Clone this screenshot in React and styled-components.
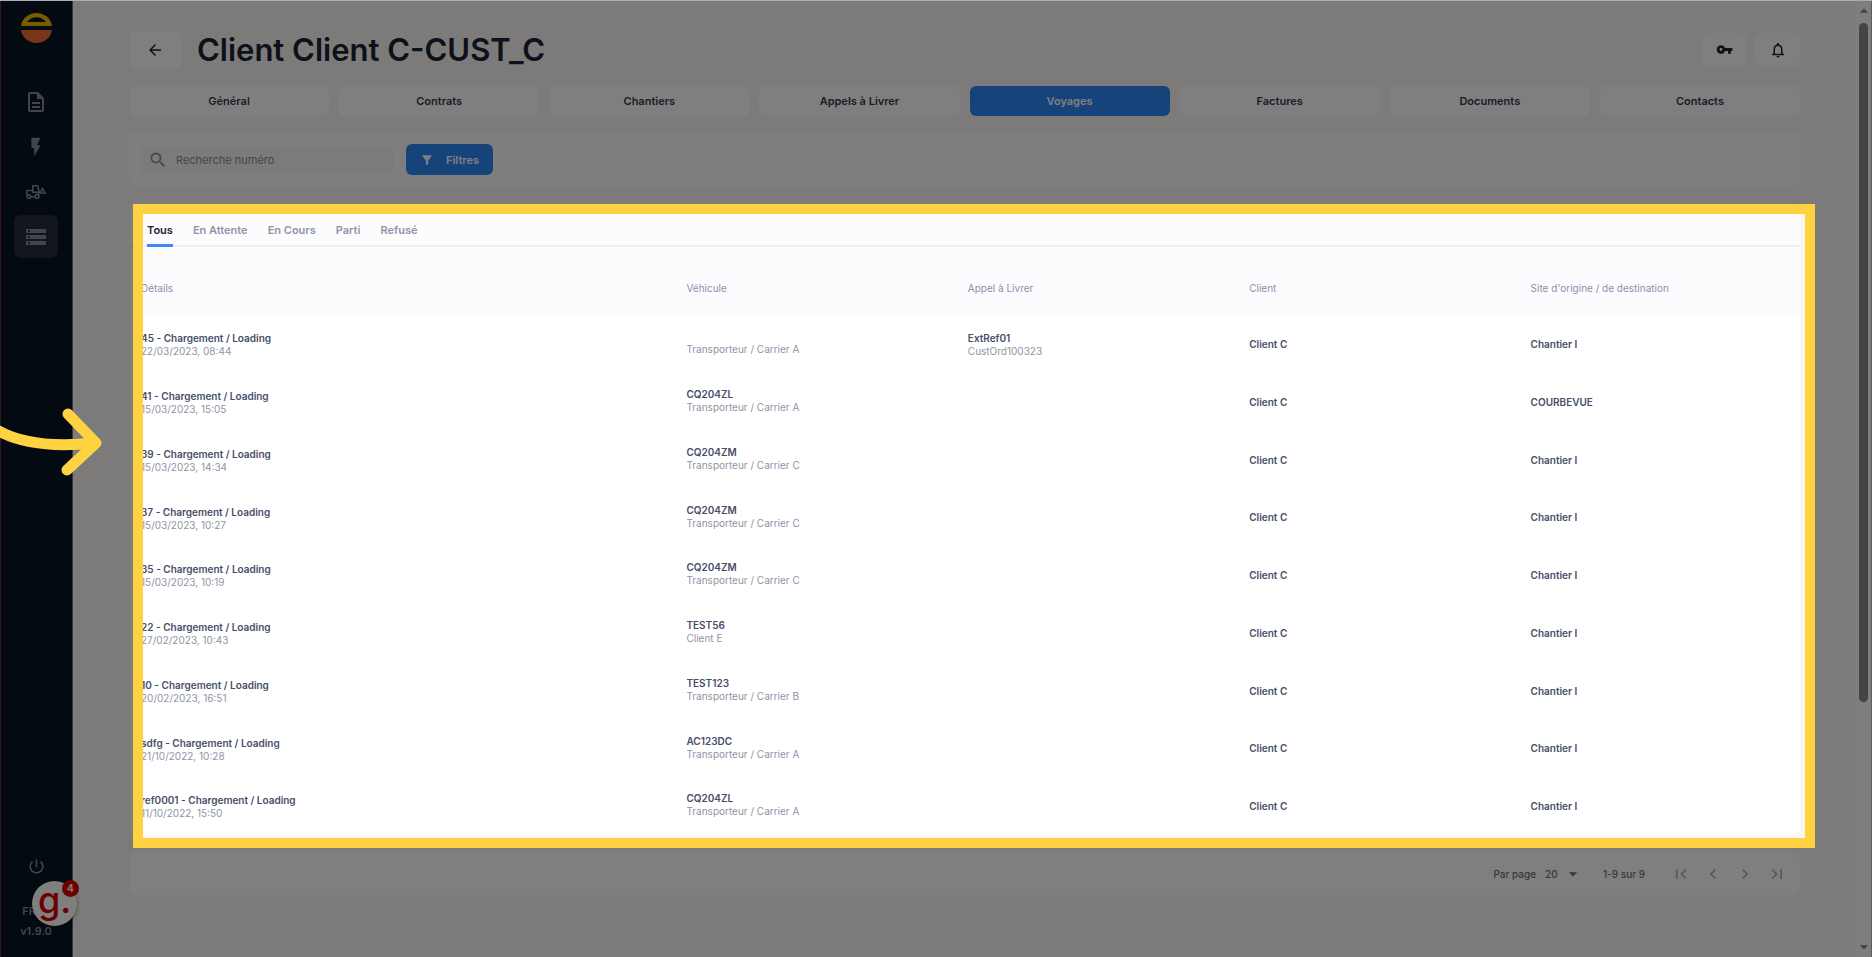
import React from 'react';
import styled, { createGlobalStyle } from 'styled-components';
import {
  MdArrowBack,
  MdArrowDropDown,
  MdArrowDropUp,
  MdChevronLeft,
  MdChevronRight,
  MdFilterAlt,
  MdFirstPage,
  MdFlashOn,
  MdLastPage,
  MdOutlineDescription,
  MdOutlineNotifications,
  MdPowerSettingsNew,
  MdSearch,
  MdStorage,
  MdVpnKey
} from 'react-icons/md';

const sections = [
  'Général',
  'Contrats',
  'Chantiers',
  'Appels à Livrer',
  'Voyages',
  'Factures',
  'Documents',
  'Contacts'
];

const statuses = ['Tous', 'En Attente', 'En Cours', 'Parti', 'Refusé'];

const columns = ['Détails', 'Véhicule', 'Appel à Livrer', 'Client', "Site d'origine / de destination"];

const trips = [
  { ref: '45', date: '22/03/2023, 08:44', plate: '', carrier: 'Transporteur / Carrier A', order: 'ExtRef01', orderRef: 'CustOrd100323', site: 'Chantier I' },
  { ref: '41', date: '15/03/2023, 15:05', plate: 'CQ204ZL', carrier: 'Transporteur / Carrier A', site: 'COURBEVUE' },
  { ref: '39', date: '15/03/2023, 14:34', plate: 'CQ204ZM', carrier: 'Transporteur / Carrier C', site: 'Chantier I' },
  { ref: '37', date: '15/03/2023, 10:27', plate: 'CQ204ZM', carrier: 'Transporteur / Carrier C', site: 'Chantier I' },
  { ref: '35', date: '15/03/2023, 10:19', plate: 'CQ204ZM', carrier: 'Transporteur / Carrier C', site: 'Chantier I' },
  { ref: '22', date: '27/02/2023, 10:43', plate: 'TEST56', carrier: 'Client E', site: 'Chantier I' },
  { ref: '10', date: '20/02/2023, 16:51', plate: 'TEST123', carrier: 'Transporteur / Carrier B', site: 'Chantier I' },
  { ref: 'sdfg', date: '21/10/2022, 10:28', plate: 'AC123DC', carrier: 'Transporteur / Carrier A', site: 'Chantier I' },
  { ref: 'ref0001', date: '11/10/2022, 15:50', plate: 'CQ204ZL', carrier: 'Transporteur / Carrier A', site: 'Chantier I' }
];

const Logo = () => (
  <svg width="31" height="30" viewBox="0 0 31 30" aria-hidden="true">
    <path fillRule="evenodd" fill="#f5b800" d="M0 13C1 5.500 7.500 0 15.500 0S30 5.500 31 13zM6 9h19C22.500 5.700 19.200 4.200 15.500 4.200S8.500 5.700 6 9z" />
    <path fill="#f06a35" d="M0 17h31C30 24.500 23.500 30 15.500 30S1 24.500 0 17z" />
  </svg>
);

const LoaderIcon = () => (
  <svg width="20" height="14" viewBox="0 0 20 14" fill="none" stroke="currentColor" strokeWidth="1.600" aria-hidden="true">
    <path d="M.8 10.500V5.500h6V.8h5l1 4.700v3.800M6.800 5.500v1.700h6M5 11.800h3.500M13 7.200h2.500" />
    <path d="M15 8V6.500l1.500-3 2.500 4.700z" />
    <circle cx="2.900" cy="11.500" r="1.800" />
    <circle cx="11" cy="11.500" r="1.900" />
  </svg>
);

const App = () => {
  return (
    <Page>
      <GlobalStyle />
      <Sidebar>
        <Logo />
        <Nav aria-label="Navigation">
          <NavButton aria-label="Contrats"><MdOutlineDescription size={24} /></NavButton>
          <NavButton aria-label="Production"><MdFlashOn size={22} /></NavButton>
          <NavButton aria-label="Engins"><LoaderIcon /></NavButton>
          <NavButton aria-label="Données" $active><MdStorage size={24} /></NavButton>
        </Nav>
        <SidebarFooter>
          <PowerButton aria-label="Déconnexion"><MdPowerSettingsNew size={19} /></PowerButton>
          <LanguageButton>FR<MdArrowDropDown size={14} /></LanguageButton>
          <span>v1.9.0</span>
        </SidebarFooter>
        <HelpButton aria-label="Aide">
          g.
          <Badge>4</Badge>
        </HelpButton>
      </Sidebar>

      <Main>
        <Header>
          <BackButton aria-label="Retour"><MdArrowBack size={18} /></BackButton>
          <Title>Client Client C-CUST_C</Title>
          <IconButton aria-label="Clés"><MdVpnKey size={17} /></IconButton>
          <IconButton aria-label="Notifications"><MdOutlineNotifications size={18} /></IconButton>
        </Header>

        <Sections>
          {sections.map(name => (
            <SectionButton key={name} $active={name === 'Voyages'}>{name}</SectionButton>
          ))}
        </Sections>

        <Toolbar>
          <SearchBox>
            <MdSearch size={20} />
            <SearchInput type="text" placeholder="Recherche numéro" aria-label="Recherche numéro" />
          </SearchBox>
          <FilterButton><MdFilterAlt size={14} />Filtres</FilterButton>
        </Toolbar>

        <TableCard>
          <Statuses>
            {statuses.map(name => (
              <StatusTab key={name} $active={name === 'Tous'}>{name}</StatusTab>
            ))}
          </Statuses>
          <Table>
            <thead>
              <tr>
                {columns.map(name => <HeadCell key={name}>{name}</HeadCell>)}
              </tr>
            </thead>
            <tbody>
              {trips.map(trip => (
                <Row key={trip.ref}>
                  <Cell>
                    <Strong>{trip.ref} - Chargement / Loading</Strong>
                    <Muted>{trip.date}</Muted>
                  </Cell>
                  <Cell $lift="4px">
                    <Strong>{trip.plate}</Strong>
                    <Muted>{trip.carrier}</Muted>
                  </Cell>
                  <Cell>
                    {trip.order && <Strong>{trip.order}</Strong>}
                    {trip.orderRef && <Muted>{trip.orderRef}</Muted>}
                  </Cell>
                  <Cell $lift="2px"><Strong>Client C</Strong></Cell>
                  <Cell $lift="2px"><Strong>{trip.site}</Strong></Cell>
                </Row>
              ))}
            </tbody>
          </Table>
          <Spotlight />
        </TableCard>

        <Pagination>
          <label htmlFor="per-page">Par page</label>
          <SelectWrapper>
            <PageSelect id="per-page" defaultValue="20">
              <option>20</option>
              <option>50</option>
            </PageSelect>
            <MdArrowDropDown size={20} />
          </SelectWrapper>
          <Range>1-9 sur 9</Range>
          <PageButtons>
            <PageButton aria-label="Première page"><MdFirstPage size={20} /></PageButton>
            <PageButton aria-label="Page précédente"><MdChevronLeft size={20} /></PageButton>
            <PageButton aria-label="Page suivante"><MdChevronRight size={20} /></PageButton>
            <PageButton aria-label="Dernière page"><MdLastPage size={20} /></PageButton>
          </PageButtons>
        </Pagination>
      </Main>

      <ScrollTrack>
        <MdArrowDropUp size={20} />
        <ScrollThumb />
        <MdArrowDropDown size={20} />
      </ScrollTrack>

      <Pointer width="104" height="76" viewBox="0 0 104 76" aria-hidden="true">
        <path d="M-12 19C10 36 46 43 94 38" />
        <path d="M68 9l28 29-29 27" />
      </Pointer>
    </Page>
  );
};

const GlobalStyle = createGlobalStyle`
  * {
    box-sizing: border-box;
  }
  body {
    margin: 0;
    font-family: Inter, 'Liberation Sans', sans-serif;
    font-size: 11px;
    color: #1b2235;
  }
  button, input, select {
    font: inherit;
    color: inherit;
    border: 0;
    padding: 0;
    background: none;
  }
  button {
    cursor: pointer;
  }
  svg {
    flex: none;
  }
`;

const Page = styled.div`
  position: relative;
  display: flex;
  min-height: 100vh;
  overflow: hidden;
  background: #f9f7f2;
  border-top: 1px solid #a9adb8;
`;

const Sidebar = styled.aside`
  position: relative;
  display: flex;
  flex-direction: column;
  align-items: center;
  width: 73px;
  padding: 12px 1px 16px 0;
  background: #081523;
  border-left: 1px solid #6b3048;
  border-right: 1px solid #6c7078;
`;

const Nav = styled.nav`
  display: flex;
  flex-direction: column;
  gap: 2px;
  margin-top: 37px;
`;

const NavButton = styled.button`
  display: flex;
  align-items: center;
  justify-content: center;
  width: 44px;
  height: 43px;
  border-radius: 7px;
  color: #868b9d;
  background: ${({ $active }) => ($active ? '#242a3a' : 'transparent')};
`;

const SidebarFooter = styled.div`
  display: flex;
  flex-direction: column;
  align-items: center;
  margin-top: auto;
  color: #868b9d;
  font-weight: 600;
  line-height: 20px;
`;

const PowerButton = styled.button`
  height: 20px;
  margin-bottom: 24px;
`;

const LanguageButton = styled.button`
  display: flex;
  align-items: center;
`;

const HelpButton = styled.button`
  position: absolute;
  left: 31px;
  bottom: 31px;
  width: 45px;
  height: 45px;
  border-radius: 50%;
  background: #fff;
  box-shadow: 0 1px 4px rgba(0, 0, 0, 0.4);
  color: #d80000;
  font-size: 36px;
  font-weight: 500;
  line-height: 32px;
  padding-bottom: 8px;
`;

const Badge = styled.span`
  position: absolute;
  top: -1px;
  right: -2px;
  width: 17px;
  height: 17px;
  border-radius: 50%;
  background: #d80000;
  color: #fff;
  font-size: 10px;
  font-weight: 700;
  line-height: 17px;
`;

const Main = styled.main`
  flex: 1;
  min-width: 0;
  padding: 30px 56px 0;
`;

const Header = styled.header`
  display: flex;
  align-items: center;
  gap: 8px;
  height: 37px;
`;

const IconButton = styled.button`
  display: flex;
  align-items: center;
  justify-content: center;
  width: 45px;
  height: 33px;
  border-radius: 6px;
  background: #fff;
`;

const BackButton = styled(IconButton)`
  width: 52px;
  height: 37px;
`;

const Title = styled.h1`
  flex: 1;
  margin: 0 0 0 8px;
  font-size: 31px;
  font-weight: 600;
  line-height: 36px;
`;

const Sections = styled.nav`
  display: flex;
  gap: 10px;
  margin-top: 18px;
`;

const SectionButton = styled.button`
  flex: 1;
  height: 30px;
  border-radius: 6px;
  font-weight: 600;
  color: ${({ $active }) => ($active ? '#fff' : '#333b52')};
  background: ${({ $active }) => ($active ? '#2f86f6' : '#fff')};
`;

const Card = styled.section`
  background: #fff;
  border-radius: 8px;
  margin-top: 16px;
`;

const Toolbar = styled(Card)`
  display: flex;
  align-items: center;
  gap: 12px;
  height: 55px;
  padding: 0 12px;
  background: #fcfcfc;
`;

const SearchBox = styled.div`
  display: flex;
  align-items: center;
  gap: 8px;
  width: 253px;
  height: 28px;
  padding: 0 7px;
  border-radius: 4px;
  background: #f6f6f7;
  color: #868b9d;
`;

const SearchInput = styled.input`
  flex: 1;
  min-width: 0;
  outline: none;
  &::placeholder {
    color: #868b9d;
    opacity: 1;
  }
`;

const FilterButton = styled.button`
  display: flex;
  align-items: center;
  gap: 12px;
  height: 31px;
  padding: 0 14px;
  border-radius: 6px;
  background: #2f86f6;
  color: #fff;
  font-weight: 600;
`;

const TableCard = styled(Card)`
  position: relative;
`;

const Statuses = styled.div`
  display: flex;
  gap: 20px;
  padding: 13px 18px 0;
  background: #fcfcfc;
  border-bottom: 2px solid #eeeeee;
  border-radius: 8px 8px 0 0;
`;

const StatusTab = styled.button`
  height: 31px;
  margin-bottom: -2px;
  font-weight: 600;
  color: ${({ $active }) => ($active ? '#1b2235' : '#8f94ab')};
  border-bottom: 3px solid ${({ $active }) => ($active ? '#3a8bfb' : 'transparent')};
`;

const Table = styled.table`
  width: 100%;
  table-layout: fixed;
  border-collapse: collapse;
  text-align: left;
  font-size: 10px;
`;

const HeadCell = styled.th`
  width: 16.84%;
  height: 69px;
  padding: 12px 12px 0;
  background: #fcfcfe;
  font-weight: 400;
  color: #8a92ab;
  &:first-child {
    width: auto;
  }
`;

const Row = styled.tr`
  height: 58px;
  &:nth-child(4n) {
    height: 57px;
  }
`;

const Cell = styled.td`
  padding: 0 12px ${({ $lift }) => $lift || '0'};
  line-height: 13px;
`;

const Strong = styled.div`
  min-height: 13px;
  font-weight: 600;
  color: #474e68;
`;

const Muted = styled.div`
  color: #8f94a5;
`;

/* dims everything outside its own frame */
const Spotlight = styled.div`
  position: absolute;
  z-index: 2;
  top: 1px;
  right: -15px;
  bottom: -12px;
  left: 4px;
  border: 10px solid #ffd242;
  box-shadow: 0 0 0 3000px rgba(0, 0, 0, 0.5);
  pointer-events: none;
`;

const Pagination = styled(Card)`
  display: flex;
  align-items: center;
  justify-content: flex-end;
  height: 43px;
  padding: 0 7px;
  font-size: 10px;
  font-weight: 500;
  color: #707070;
`;

const SelectWrapper = styled.span`
  display: flex;
  align-items: center;
  margin-left: 9px;
`;

const PageSelect = styled.select`
  appearance: none;
  width: 18px;
  outline: none;
`;

const Range = styled.span`
  margin-left: 20px;
`;

const PageButtons = styled.div`
  display: flex;
  margin-left: 20px;
`;

const PageButton = styled.button`
  display: flex;
  align-items: center;
  justify-content: center;
  width: 32px;
  height: 32px;
  color: #b0b0b0;
`;

const ScrollTrack = styled.div`
  display: flex;
  flex-direction: column;
  align-items: center;
  width: 16px;
  background: #fcfcfc;
  border-right: 1px solid #b9b4d0;
  color: #888;
`;

const ScrollThumb = styled.div`
  width: 9px;
  height: 71%;
  margin: 2px 0 auto;
  border-radius: 5px;
  background: #888;
`;

const Pointer = styled.svg`
  position: absolute;
  z-index: 3;
  top: 404px;
  left: 0;
  fill: none;
  stroke: #ffd242;
  stroke-width: 11px;
  stroke-linecap: round;
  stroke-linejoin: round;
`;

export default App;
